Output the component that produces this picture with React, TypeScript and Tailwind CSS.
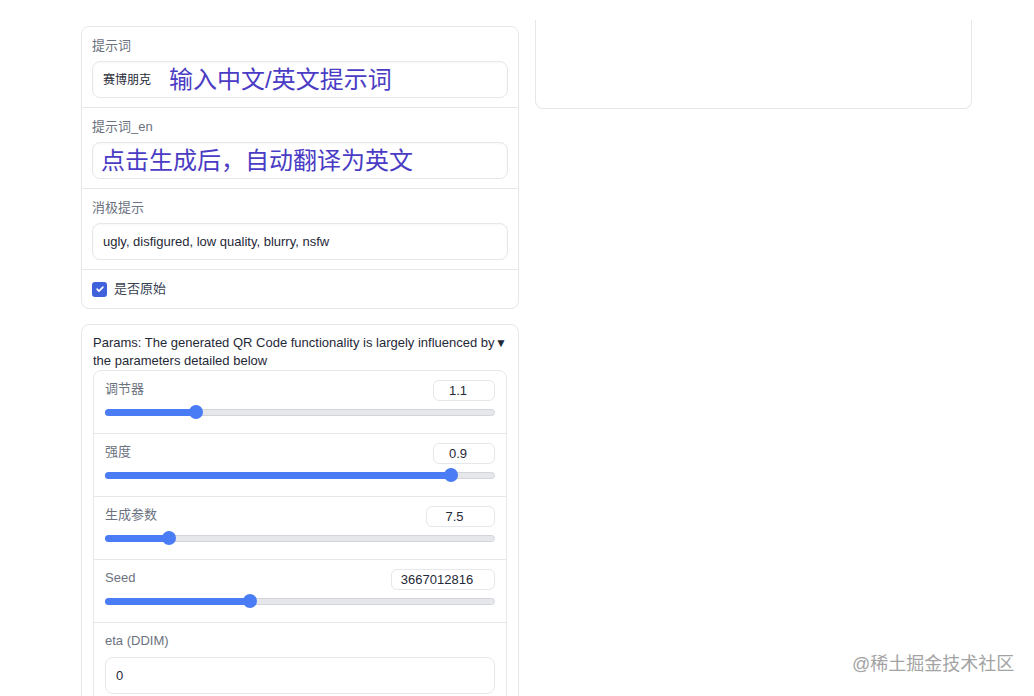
import React from 'react';

const font = { fontFamily: '"Liberation Sans", "Noto Sans CJK SC", sans-serif' };

type SliderRow = { label: string; value: string; pct: number; box: string };

const sliders: SliderRow[] = [
  { label: '调节器', value: '1.1', pct: 23.3, box: 'w-[62px]' },
  { label: '强度', value: '0.9', pct: 88.7, box: 'w-[62px]' },
  { label: '生成参数', value: '7.5', pct: 16.4, box: 'w-[69px]' },
  { label: 'Seed', value: '3667012816', pct: 37.3, box: 'w-[104px]' },
];

function Field({ label, children }: { label: string; children: React.ReactNode }) {
  return (
    <div className="px-[10px] pt-[10px] pb-[9px] border-b border-[#e5e7eb]">
      <div className="text-[13px] leading-[17px] text-[#6b7280]">{label}</div>
      <div className="mt-[7px] h-[37px] rounded-[8px] border border-[#e5e7eb] bg-white shadow-[inset_0_1px_2px_rgba(0,0,0,0.03)] flex items-center px-[10px] overflow-hidden whitespace-nowrap">
        {children}
      </div>
    </div>
  );
}

function Slider({ row }: { row: SliderRow }) {
  return (
    <div className="px-[11px] pt-[9px] pb-[14px] border-b border-[#e5e7eb]">
      <div className="flex items-start justify-between">
        <span className="text-[13px] leading-[17px] text-[#6b7280]">{row.label}</span>
        <div
          className={`${row.box} h-[21px] rounded-[6px] border border-[#e5e7eb] text-[13px] text-[#1f2937] flex items-center justify-center pr-[12px]`}
        >
          {row.value}
        </div>
      </div>
      <div className="relative mt-[4px] h-[14px] flex items-center">
        <div className="w-full h-[7px] rounded-full bg-[#e5e7eb] border border-[#d1d5db]" />
        <div className="absolute left-0 h-[7px] rounded-full bg-[#4a7cf5]" style={{ width: `${row.pct}%` }} />
        <div
          className="absolute w-[14px] h-[14px] rounded-full bg-[#4a7cf5] -translate-x-1/2"
          style={{ left: `${row.pct}%` }}
        />
      </div>
    </div>
  );
}

export default function App() {
  return (
    <div className="relative w-[1034px] h-[696px] overflow-hidden bg-white" style={font}>
      <div className="flex gap-[16px] pl-[81px] pt-[20px]">
        {/* 左侧 */}
        <div className="w-[438px] flex flex-col gap-[15px] mt-[6px]">
          <div className="rounded-[8px] border border-[#e5e7eb] bg-white">
            <Field label="提示词">
              <span className="text-[12px] text-[#1f2937] mr-[18px]">赛博朋克</span>
              <span className="text-[24px] text-[#4a3cc4]">输入中文/英文提示词</span>
            </Field>
            <Field label="提示词_en">
              <span className="text-[24px] text-[#4a3cc4] -ml-[2px]">点击生成后，自动翻译为英文</span>
            </Field>
            <Field label="消极提示">
              <span className="text-[13px] text-[#1f2937]">ugly, disfigured, low quality, blurry, nsfw</span>
            </Field>
            <div className="px-[10px] py-[10px] flex items-center gap-[7px] h-[38px]">
              <span className="w-[15px] h-[15px] rounded-[3px] bg-[#3f62dc] flex items-center justify-center">
                <svg width="10" height="10" viewBox="0 0 24 24" fill="none" stroke="white" strokeWidth="4" strokeLinecap="round" strokeLinejoin="round">
                  <path d="M5 12.5l4.5 4.5L19 7.5" />
                </svg>
              </span>
              <span className="text-[13px] text-[#374151]">是否原始</span>
            </div>
          </div>

          <div className="rounded-[8px] border border-[#e5e7eb] bg-white px-[11px] pt-[9px] pb-[10px]">
            <div className="flex justify-between text-[13px] leading-[18px] text-[#1f2937]">
              <span>
                <span className="whitespace-nowrap">Params: The generated QR Code functionality is largely influenced by</span>
                <br />
                <span className="whitespace-nowrap">the parameters detailed below</span>
              </span>
              <span className="text-[12px]">▼</span>
            </div>
            <div className="rounded-[8px] border border-[#e5e7eb]">
              {sliders.map((s) => (
                <Slider key={s.label} row={s} />
              ))}
              <div className="px-[11px] pt-[9px] pb-[10px]">
                <div className="text-[13px] leading-[17px] text-[#6b7280]">eta (DDIM)</div>
                <div className="mt-[8px] h-[37px] rounded-[8px] border border-[#e5e7eb] flex items-center px-[10px] text-[13px] text-[#1f2937]">
                  0
                </div>
              </div>
            </div>
          </div>
        </div>

        {/* 右侧 */}
        <div className="w-[437px] h-[89px] rounded-b-[8px] border-x border-b border-[#e5e7eb] bg-white" />
      </div>

      <div className="absolute left-[852px] top-[652px] text-[18px] leading-[24px] text-[#a3a3a3]">@稀土掘金技术社区</div>
    </div>
  );
}
